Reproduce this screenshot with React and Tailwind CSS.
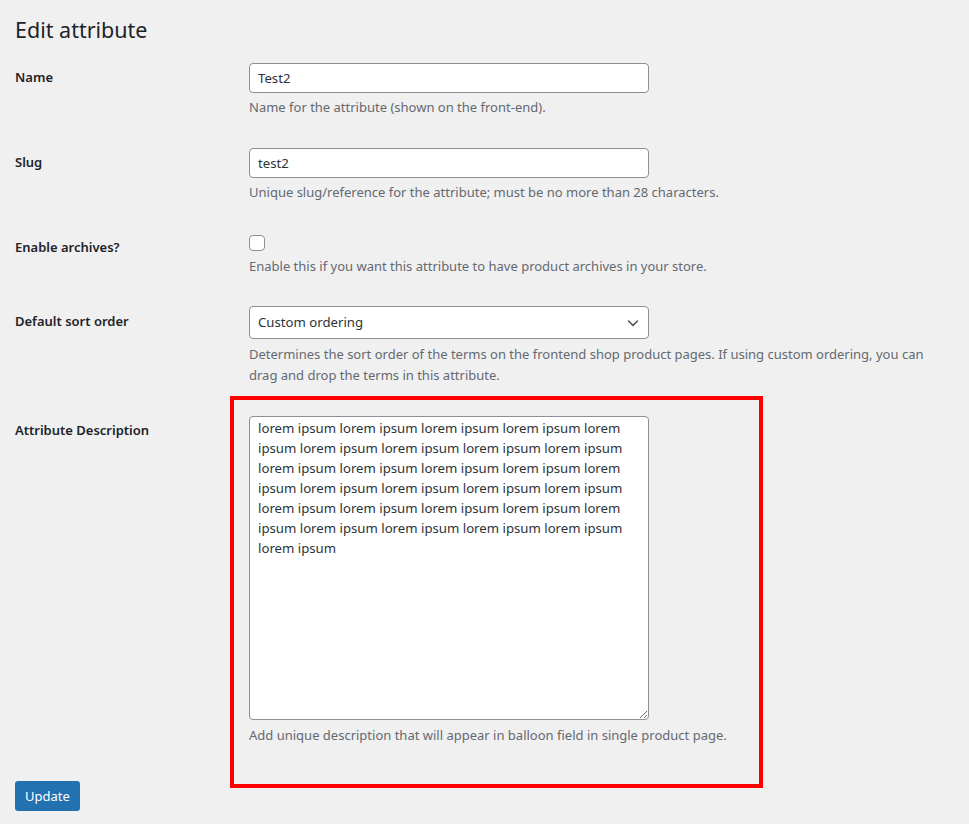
import React from "react";

const font = { fontFamily: '"Segoe UI", "Noto Sans", "Open Sans", sans-serif' };

function Label({ children }) {
  return (
    <div className="w-[249px] shrink-0 pl-[15px] pt-[20px] text-[13px] font-semibold leading-[18px] text-[#1d2327]">
      {children}
    </div>
  );
}

function Desc({ children, className = "" }) {
  return (
    <p className={"text-[13px] leading-[21px] text-[#646970] whitespace-nowrap " + className}>{children}</p>
  );
}

const lorem = [
  "lorem ipsum lorem ipsum lorem ipsum lorem ipsum lorem",
  "ipsum lorem ipsum lorem ipsum lorem ipsum lorem ipsum",
  "lorem ipsum lorem ipsum lorem ipsum lorem ipsum lorem",
  "ipsum lorem ipsum lorem ipsum lorem ipsum lorem ipsum",
  "lorem ipsum lorem ipsum lorem ipsum lorem ipsum lorem",
  "ipsum lorem ipsum lorem ipsum lorem ipsum lorem ipsum",
  "lorem ipsum",
].join("\n");

export default function App() {
  return (
    <div className="relative min-h-[824px] w-[969px] overflow-hidden bg-[#f0f0f1] text-[#1d2327]" style={font}>
      <h1 className="pl-[15px] pt-[15px] mb-[3px] text-[21.5px] font-normal leading-[30px] text-[#1d2327]">
        Edit attribute
      </h1>

      {/* Name */}
      <div className="flex">
        <Label>Name</Label>
        <div className="py-[15px]">
          <input
            readOnly
            value="Test2"
            className="block h-[30px] w-[400px] rounded-[4px] border border-[#8c8f94] bg-white px-[8px] text-[13.2px] text-[#2c3338] outline-none"
          />
          <Desc className="mt-[4px]">Name for the attribute (shown on the front-end).</Desc>
        </div>
      </div>

      {/* Slug */}
      <div className="flex">
        <Label>Slug</Label>
        <div className="py-[15px]">
          <input
            readOnly
            value="test2"
            className="block h-[30px] w-[400px] rounded-[4px] border border-[#8c8f94] bg-white px-[8px] text-[13.2px] text-[#2c3338] outline-none"
          />
          <Desc className="mt-[4px]">Unique slug/reference for the attribute; must be no more than 28 characters.</Desc>
        </div>
      </div>

      {/* Enable archives */}
      <div className="flex">
        <Label>Enable archives?</Label>
        <div className="py-[15px]">
          <div className="mt-[2px] h-[16px] w-[16px] rounded-[4px] border border-[#8c8f94] bg-white" />
          <Desc className="mt-[5px]">Enable this if you want this attribute to have product archives in your store.</Desc>
        </div>
      </div>

      {/* Default sort order */}
      <div className="flex">
        <Label>Default sort order</Label>
        <div className="pt-[14px] pb-[15px]">
          <div className="flex h-[33px] w-[400px] items-center justify-between rounded-[4px] border border-[#8c8f94] bg-white pl-[8px] pr-[8px] text-[13.2px] text-[#2c3338]">
            <span>Custom ordering</span>
            <svg width="14" height="14" viewBox="0 0 14 14" fill="none">
              <path d="M2.5 5 L7 9.3 L11.5 5" stroke="#50575e" strokeWidth="1.6" strokeLinecap="round" strokeLinejoin="round" />
            </svg>
          </div>
          <Desc className="mt-[5px]">
            Determines the sort order of the terms on the frontend shop product pages. If using custom ordering, you can
            <br />
            drag and drop the terms in this attribute.
          </Desc>
        </div>
      </div>

      {/* Attribute Description */}
      <div className="flex">
        <Label>Attribute Description</Label>
        <div className="py-[15px]">
          <textarea
            readOnly
            wrap="off"
            value={lorem}
            className="block h-[304px] w-[400px] resize rounded-[4px] border border-[#8c8f94] bg-white px-[8px] py-[1px] text-[13.2px] leading-[20px] text-[#2c3338] outline-none overflow-hidden"
          />
          <Desc className="mt-[5px]">Add unique description that will appear in balloon field in single product page.</Desc>
        </div>
      </div>

      <div className="pl-[15px] mt-[20px]">
        <button className="h-[30px] rounded-[3px] bg-[#2271b1] px-[10px] text-[13px] leading-[28px] text-white">
          Update
        </button>
      </div>

      {/* red annotation box */}
      <div className="pointer-events-none absolute left-[230px] top-[396px] h-[392px] w-[533px] border-[4px] border-[#ff0000]" />
    </div>
  );
}
